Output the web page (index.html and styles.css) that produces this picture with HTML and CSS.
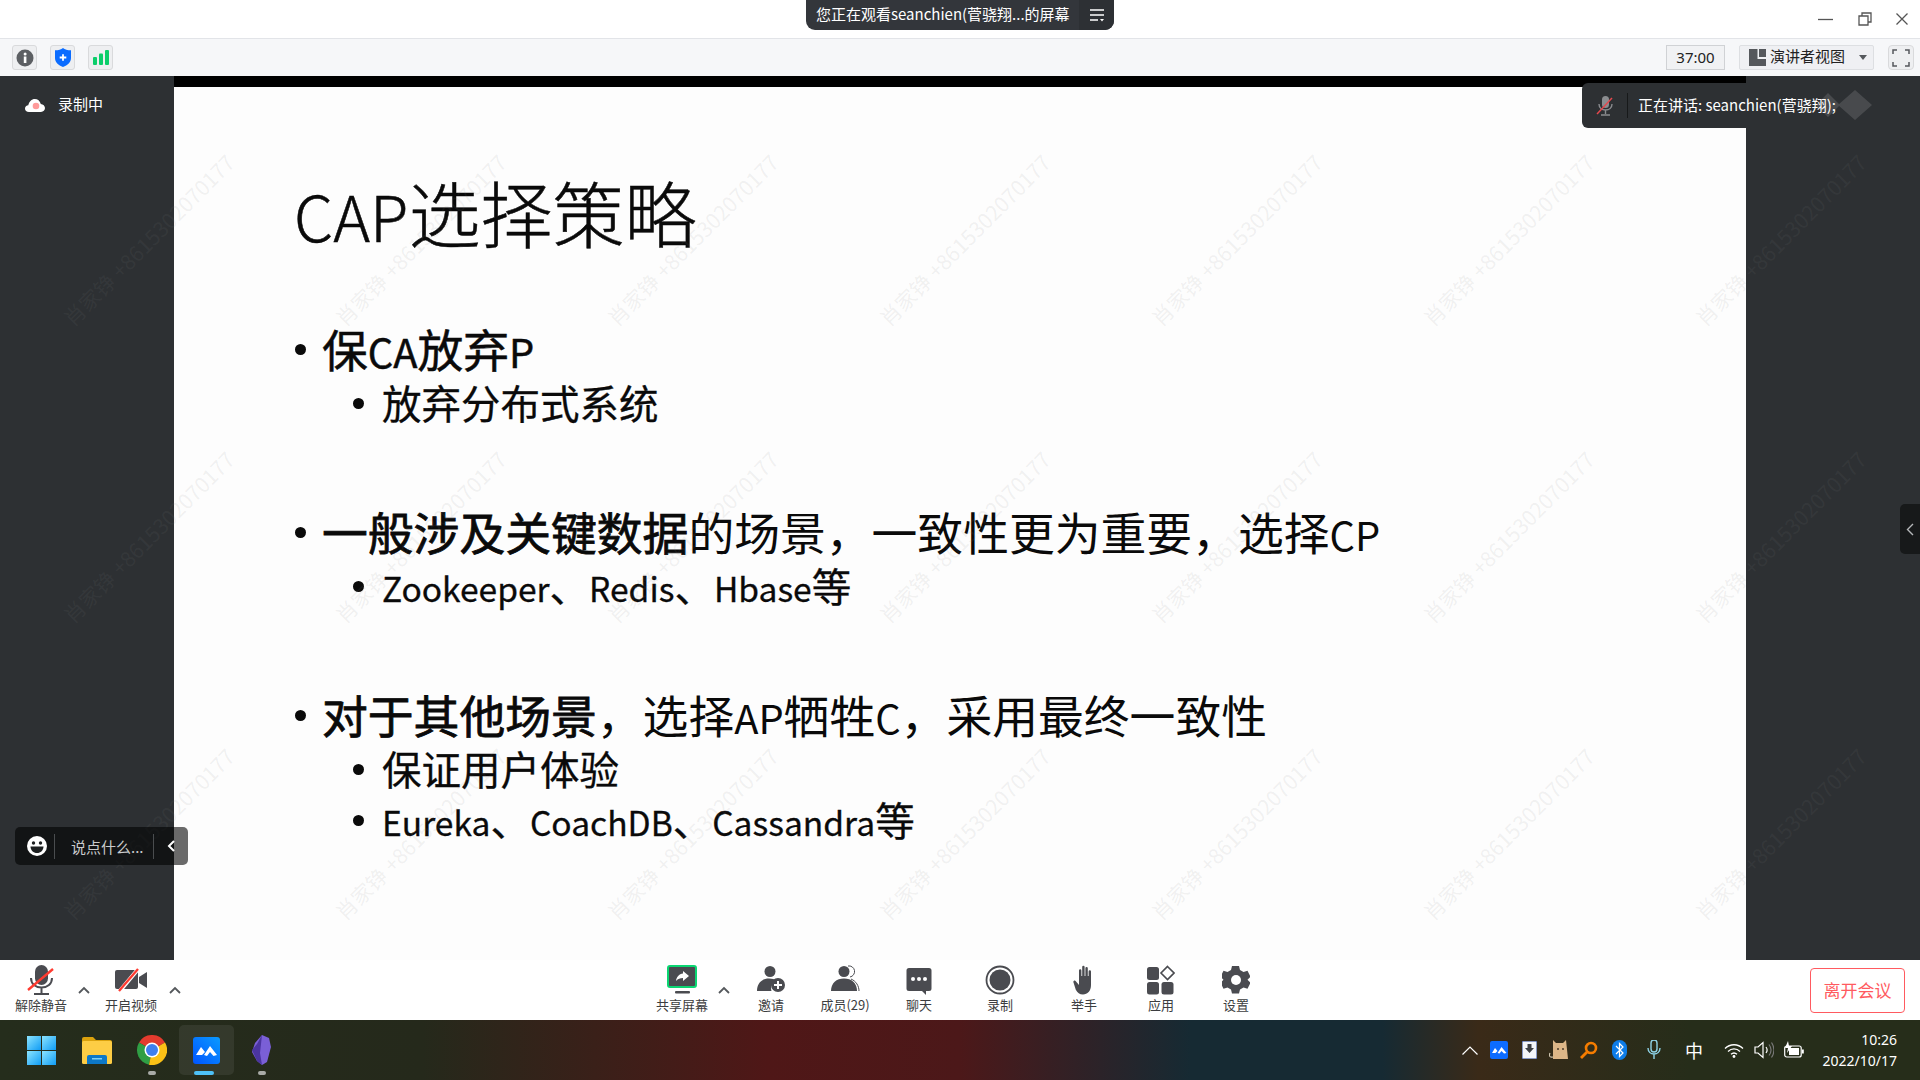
FILE: index.html
```html
<!DOCTYPE html>
<html lang="zh-CN">
<head>
<meta charset="utf-8">
<title>腾讯会议</title>
<link rel="stylesheet" href="styles.css">
</head>
<body>
<div class="app">
  <header class="titlebar">
    <div class="share-pill">
      <span class="share-text">您正在观看seanchien(菅骁翔...的屏幕</span>
      <span class="share-menu">
        <svg width="16" height="14" viewBox="0 0 16 14"><path d="M1 2h14M1 7h14M1 12h8" stroke="#fff" stroke-width="1.4" fill="none"/><path d="M11 11h4l-2 2.4z" fill="#fff"/></svg>
      </span>
    </div>
    <div class="win-controls">
      <svg width="16" height="16" viewBox="0 0 16 16"><path d="M0 8.5h15" stroke="#555" stroke-width="1.3"/></svg>
      <svg width="14" height="14" viewBox="0 0 14 14"><path d="M1 4h9v9H1zM4 4V1h9v9h-3" stroke="#555" stroke-width="1.3" fill="none"/></svg>
      <svg width="12" height="12" viewBox="0 0 12 12"><path d="M.5.5l11 11M11.5.5l-11 11" stroke="#555" stroke-width="1.3"/></svg>
    </div>
  </header>

  <div class="toolbar-top">
    <div class="tool-left">
      <span class="tool-box"><svg width="18" height="18" viewBox="0 0 18 18"><circle cx="9" cy="9" r="8.5" fill="#5c5f63"/><rect x="7.8" y="7.5" width="2.6" height="6.5" fill="#fff"/><circle cx="9.1" cy="4.9" r="1.5" fill="#fff"/></svg></span>
      <span class="tool-box"><svg width="16" height="19" viewBox="0 0 16 19"><path d="M8 0c1.700 1.500 4.600 2.300 8 2.300V10c0 4.300-3.400 7.300-8 9-4.600-1.700-8-4.700-8-9V2.300C3.400 2.300 6.300 1.500 8 0z" fill="#0b6cff"/><path d="M8 6.200v6.600M4.700 9.500h6.600" stroke="#fff" stroke-width="1.800"/></svg></span>
      <span class="tool-box"><svg width="16" height="15" viewBox="0 0 16 15"><rect x="0" y="7" width="4" height="8" rx="1" fill="#0bce6a"/><rect x="6" y="3.500" width="4" height="11.500" rx="1" fill="#0bce6a"/><rect x="12" y="0" width="4" height="15" rx="1" fill="#0bce6a"/></svg></span>
    </div>
    <div class="tool-right">
      <span class="timer">37:00</span>
      <span class="view-btn">
        <svg width="17" height="17" viewBox="0 0 17 17"><path d="M0 0h8.500v10H17v7H0z" fill="#55585c"/><rect x="10" y="0" width="7" height="8" fill="#55585c"/></svg>
        <span class="view-label">演讲者视图</span>
        <svg class="view-caret" width="8" height="5" viewBox="0 0 8 5"><path d="M0 0h8L4 5z" fill="#55585c"/></svg>
      </span>
      <span class="tool-box full-btn"><svg width="18" height="18" viewBox="0 0 18 18"><path d="M1 5V1h4M13 1h4v4M17 13v4h-4M5 17H1v-4" stroke="#55585c" stroke-width="1.500" fill="none"/></svg></span>
    </div>
  </div>

  <main class="stage">
    <aside class="side">
      <div class="rec-tag">
        <svg width="20" height="13" viewBox="0 0 20 13"><path d="M4 13C1.500 13 0 11.500 0 9.500 0 7.500 1.500 6.300 3.300 6.200 4 2.700 6.700 0 9.800 0c2.900 0 5.200 2 6 4.900 2.400.2 4.200 2 4.200 4.200 0 2.300-1.700 3.900-4 3.900z" fill="#fff"/><circle cx="11" cy="7" r="3.300" fill="#ff9a9a"/></svg>
        <span>录制中</span>
      </div>
    </aside>
    <section class="slide">
      <div class="slide-band"></div>
      <div class="slide-body">
        <h1 class="slide-title"><span class="lat">CAP</span>选择策略</h1>
        <div class="group">
          <p class="l1 semi"><span>保<span class="lat">CA</span>放弃<span class="lat">P</span></span></p>
          <p class="l2">放弃分布式系统</p>
        </div>
        <div class="group">
          <p class="l1"><span><b>一般涉及关键数据</b>的场景，一致性更为重要，选择<span class="lat">CP</span></span></p>
          <p class="l2"><span><span class="lat">Zookeeper</span>、<span class="lat">Redis</span>、<span class="lat">Hbase</span>等</span></p>
        </div>
        <div class="group">
          <p class="l1"><span><b>对于其他场景</b>，选择<span class="lat">AP</span>牺牲<span class="lat">C</span>，采用最终一致性</span></p>
          <p class="l2">保证用户体验</p>
          <p class="l2"><span><span class="lat">Eureka</span>、<span class="lat">CoachDB</span>、<span class="lat">Cassandra</span>等</span></p>
        </div>
      </div>
    </section>
    <aside class="side"></aside>

    <div class="watermarks">
      <span>肖家铮 +8615302070177</span><span>肖家铮 +8615302070177</span><span>肖家铮 +8615302070177</span><span>肖家铮 +8615302070177</span><span>肖家铮 +8615302070177</span><span>肖家铮 +8615302070177</span><span>肖家铮 +8615302070177</span>
      <span>肖家铮 +8615302070177</span><span>肖家铮 +8615302070177</span><span>肖家铮 +8615302070177</span><span>肖家铮 +8615302070177</span><span>肖家铮 +8615302070177</span><span>肖家铮 +8615302070177</span><span>肖家铮 +8615302070177</span>
      <span>肖家铮 +8615302070177</span><span>肖家铮 +8615302070177</span><span>肖家铮 +8615302070177</span><span>肖家铮 +8615302070177</span><span>肖家铮 +8615302070177</span><span>肖家铮 +8615302070177</span><span>肖家铮 +8615302070177</span>
    </div>

    <div class="speaker">
      <svg width="18" height="20" viewBox="0 0 18 20"><rect x="6" y="0" width="7" height="12" rx="3.500" fill="#8a8c8f"/><path d="M3 8c0 4 3 6 6.500 6S16 12 16 8M9.500 14v4M5 19h9" stroke="#8a8c8f" stroke-width="1.400" fill="none"/><path d="M1 18L16 2" stroke="#e5484d" stroke-width="1.500"/></svg>
      <span class="speaker-sep"></span>
      <span class="speaker-text">正在讲话: seanchien(菅骁翔);</span>
      <svg class="speaker-logo" width="64" height="30" viewBox="0 0 64 30"><path d="M18 3l12 12-12 12L6 15zM45 0l17 15-17 15-17-15z" fill="#fff" fill-opacity=".13"/></svg>
    </div>

    <div class="chat">
      <svg width="20" height="20" viewBox="0 0 20 20"><circle cx="10" cy="10" r="10" fill="#fff"/><circle cx="6.500" cy="7" r="1.700" fill="#1d2021"/><circle cx="13.500" cy="7" r="1.700" fill="#1d2021"/><path d="M3.500 10.500h13c0 3.800-2.900 6.500-6.500 6.500s-6.500-2.700-6.500-6.500z" fill="#1d2021"/></svg>
      <span class="chat-sep"></span>
      <span class="chat-text">说点什么...</span>
      <span class="chat-sep chat-sep-end"></span>
      <svg width="8" height="12" viewBox="0 0 8 12"><path d="M7 1L2 6l5 5" stroke="#fff" stroke-width="2" fill="none"/></svg>
    </div>

    <div class="side-handle">
      <svg width="8" height="13" viewBox="0 0 8 13"><path d="M7 1L1.500 6.500 7 12" stroke="#b5b7b9" stroke-width="1.400" fill="none"/></svg>
    </div>
  </main>

  <div class="toolbar-bottom">
    <div class="bt-left">
      <div class="bt-item w-audio">
        <svg class="bt-icon" width="30" height="30" viewBox="0 0 30 30"><rect x="9" y="0" width="13" height="20" rx="6.500" fill="#4a4b50"/><path d="M5 13c0 6 4.500 9.500 10.500 9.500S26 19 26 13M15.500 22.500V28M8 29h15" stroke="#4a4b50" stroke-width="2" fill="none"/><path d="M2 25L27 4" stroke="#ff3b30" stroke-width="2.300"/></svg>
        <span>解除静音</span>
      </div>
      <svg class="chev chev-audio" width="12" height="8" viewBox="0 0 12 8"><path d="M1 7l5-5 5 5" stroke="#55585c" stroke-width="1.800" fill="none"/></svg>
      <div class="bt-item w-video">
        <svg class="bt-icon" width="32" height="30" viewBox="0 0 32 30"><path d="M2 5h19a2 2 0 0 1 2 2v15a2 2 0 0 1-2 2H2a2 2 0 0 1-2-2V7a2 2 0 0 1 2-2z" fill="#4a4b50"/><path d="M24 12l8-5v16l-8-5z" fill="#4a4b50"/><path d="M4 27L24 3" stroke="#fff" stroke-width="4"/><path d="M4 26L23 4" stroke="#ff3b30" stroke-width="2.300"/></svg>
        <span>开启视频</span>
      </div>
      <svg class="chev chev-video" width="12" height="8" viewBox="0 0 12 8"><path d="M1 7l5-5 5 5" stroke="#55585c" stroke-width="1.800" fill="none"/></svg>
    </div>

    <div class="bt-center">
      <div class="bt-item w-share">
        <svg class="bt-icon" width="30" height="30" viewBox="0 0 30 30"><rect x="1" y="1" width="28" height="21" rx="2" fill="#4a4b50" stroke="#0bd672" stroke-width="2"/><path d="M16 6l6 5-6 5v-3c-3 0-5 .8-7 3 .5-4 3-7 7-7.500z" fill="#fff"/><rect x="8" y="26" width="15" height="2.500" rx="1" fill="#4a4b50"/></svg>
        <span>共享屏幕</span>
      </div>
      <svg class="chev" width="12" height="8" viewBox="0 0 12 8"><path d="M1 7l5-5 5 5" stroke="#55585c" stroke-width="1.800" fill="none"/></svg>
      <div class="bt-item w-invite">
        <svg class="bt-icon" width="29" height="30" viewBox="0 0 29 30"><circle cx="13" cy="6.500" r="5.500" fill="#4a4b50"/><path d="M0 26c0-8 5-12.500 12-12.500 3 0 5.500.7 7.500 2.300-4 1-6.500 5.500-5 10.200z" fill="#4a4b50"/><circle cx="21" cy="20" r="7" fill="#4a4b50"/><path d="M21 16v8M17 20h8" stroke="#fff" stroke-width="2"/></svg>
        <span>邀请</span>
      </div>
      <div class="bt-item w-members">
        <svg class="bt-icon" width="29" height="30" viewBox="0 0 29 30"><path d="M17 1a5.500 5.500 0 0 1 2 11" stroke="#4a4b50" stroke-width="1" fill="none"/><path d="M20 14c5 2 8 7 8 12" stroke="#4a4b50" stroke-width="1" fill="none"/><circle cx="13" cy="6.500" r="5.500" fill="#4a4b50"/><path d="M0 26c0-8 5.500-12.500 13-12.500S26 18 26 26z" fill="#4a4b50"/></svg>
        <span>成员(29)</span>
      </div>
      <div class="bt-item w-chat">
        <svg class="bt-icon" width="26" height="30" viewBox="0 0 26 30"><path d="M3 3h20a2.500 2.500 0 0 1 2.500 2.500v18a2.500 2.500 0 0 1-2.500 2.500h-3v4l-4-4H3a2.500 2.500 0 0 1-2.500-2.500v-18A2.500 2.500 0 0 1 3 3z" fill="#4a4b50"/><circle cx="7" cy="14" r="2" fill="#fff"/><circle cx="13" cy="14" r="2" fill="#fff"/><circle cx="19" cy="14" r="2" fill="#fff"/></svg>
        <span>聊天</span>
      </div>
      <div class="bt-item w-rec">
        <svg class="bt-icon" width="30" height="30" viewBox="0 0 30 30"><circle cx="15" cy="15" r="13.500" fill="none" stroke="#4a4b50" stroke-width="1.800"/><circle cx="15" cy="15" r="10.500" fill="#4a4b50"/></svg>
        <span>录制</span>
      </div>
      <div class="bt-item w-hand">
        <svg class="bt-icon" width="22" height="30" viewBox="0 0 22 30"><path d="M6 12V5.500a1.200 1.200 0 0 1 2.400 0V11h.8V2a1.200 1.200 0 0 1 2.400 0v9h.8V3.200a1.200 1.200 0 0 1 2.400 0V11h.8V6.500a1.200 1.200 0 0 1 2.400 0V20c0 6-3.500 9.500-8 9.500-3.500 0-5.500-1.800-7.200-4.800L.5 17.500c-.7-1.300 1.200-2.700 2.300-1.300L6 20z" fill="#4a4b50"/></svg>
        <span>举手</span>
      </div>
      <div class="bt-item w-apps">
        <svg class="bt-icon" width="28" height="30" viewBox="0 0 28 30"><rect x="0" y="2" width="12" height="13" rx="2.500" fill="#4a4b50"/><rect x="0" y="17" width="12" height="12.500" rx="2.500" fill="#4a4b50"/><rect x="14.500" y="17" width="12" height="12.500" rx="2.500" fill="#4a4b50"/><path d="M20.500 1.500l6.500 6.500-6.500 6.500L14 8z" fill="none" stroke="#4a4b50" stroke-width="1.600"/></svg>
        <span>应用</span>
      </div>
      <div class="bt-item w-set">
        <svg class="bt-icon" width="28" height="30" viewBox="0 0 28 30"><path d="M10.500 1h7l1 4 3.500 2 4-1.200 3 6-3 3 3 3-3 6-4-1.200-3.500 2-1 4h-7l-1-4-3.500-2-4 1.200-3-6 3-3-3-3 3-6 4 1.200 3.500-2z" fill="#4a4b50" transform="translate(-.5 0)"/><circle cx="14" cy="15" r="5" fill="#fff"/></svg>
        <span>设置</span>
      </div>
    </div>

    <div class="leave">离开会议</div>
  </div>

  <footer class="taskbar">
    <div class="tb-apps">
      <span class="tb-app"><svg width="29" height="29" viewBox="0 0 29 29"><defs><linearGradient id="w" x1="0" y1="0" x2="1" y2="1"><stop offset="0" stop-color="#8ce4ff"/><stop offset="1" stop-color="#0f9cf5"/></linearGradient></defs><rect width="14" height="14" fill="url(#w)"/><rect x="15" width="14" height="14" fill="url(#w)"/><rect y="15" width="14" height="14" fill="url(#w)"/><rect x="15" y="15" width="14" height="14" fill="url(#w)"/></svg></span>
      <span class="tb-app"><svg width="30" height="27" viewBox="0 0 30 27"><path d="M0 2a2 2 0 0 1 2-2h9l3 3h14a2 2 0 0 1 2 2v4H0z" fill="#dba20d"/><rect y="4" width="30" height="23" rx="1.500" fill="#fdcd45"/><path d="M5 20a2 2 0 0 1 2-2h16a2 2 0 0 1 2 2v7H5z" fill="#0d78c8"/><rect x="10" y="21" width="10" height="1.500" fill="#7fd0f5"/></svg></span>
      <span class="tb-app has-dot"><svg width="30" height="30" viewBox="0 0 30 30"><path d="M15 15L2 7.500A15 15 0 0 1 28 7.500z" fill="#e33b2e"/><path d="M15 15L2 7.500A15 15 0 0 0 12 29.700z" fill="#2f9e44"/><path d="M15 15L28 7.500A15 15 0 0 1 12 29.700z" fill="#fbc116"/><circle cx="15" cy="15" r="7.500" fill="#fff"/><circle cx="15" cy="15" r="6" fill="#3f7fee"/></svg></span>
      <span class="tb-app active"><svg width="27" height="27" viewBox="0 0 27 27"><defs><linearGradient id="m" x1="0" y1="1" x2="1" y2="0"><stop offset="0" stop-color="#0054ff"/><stop offset="1" stop-color="#0a9bff"/></linearGradient></defs><rect width="27" height="27" rx="3" fill="url(#m)"/><path d="M3 18l5-8 4 5-3 3zM11 18l6-9 7 9-3.500 1-3.500-4-3 4z" fill="#fff"/></svg></span>
      <span class="tb-app has-dot"><svg width="20" height="30" viewBox="0 0 20 30"><path d="M10 0l7 3 2 9-4 15-5 3-5-4-5-9 3-9z" fill="#7a5fd6"/><path d="M10 0L5 9l-5 6 5 11 5 4-2-12z" fill="#4b35a0"/></svg></span>
    </div>
    <div class="tray">
      <svg class="t-chev" width="16" height="9" viewBox="0 0 16 9"><path d="M.5 8.500L8 1l7.500 7.500" stroke="#fff" stroke-width="1.200" fill="none"/></svg>
      <span class="tray-item"><svg width="18" height="18" viewBox="0 0 18 18"><rect width="18" height="18" rx="2" fill="#0d6cff"/><path d="M2 12l3-5 2.500 3-2 2zM7.500 12l4-6 5 6-2.500.5-2.500-2.500-2 2.500z" fill="#fff"/></svg></span>
      <span class="tray-item"><svg width="15" height="18" viewBox="0 0 15 18"><path d="M0 0h15v18H0z" fill="#f4f6fa"/><path d="M0 0h15v18H0z" fill="none" stroke="#1c3d8f" stroke-width="1"/><path d="M5.500 3h4v4H12l-4.500 5L3 7h2.500z" fill="#3c3f44"/></svg></span>
      <span class="tray-item"><svg width="21" height="20" viewBox="0 0 21 20"><path d="M4 0l3 3h7l3-3 2 19H4z" fill="#ddb687"/><circle cx="9" cy="9" r="1" fill="#4a3a28"/><circle cx="14" cy="9" r="1" fill="#4a3a28"/><path d="M4 17C0 18 0 15 1 13" stroke="#cfc4ad" stroke-width="1.200" fill="none"/></svg></span>
      <span class="tray-item"><svg width="18" height="18" viewBox="0 0 18 18"><circle cx="11" cy="7" r="5" fill="none" stroke="#f57c00" stroke-width="2.600"/><path d="M7 11l-6 6" stroke="#f57c00" stroke-width="2.800"/></svg></span>
      <span class="tray-item"><svg width="15" height="20" viewBox="0 0 15 20"><rect width="15" height="20" rx="7.500" fill="#0d7ce8"/><path d="M4 6l7 7-3.500 3.500v-13L11 7l-7 7" stroke="#fff" stroke-width="1.200" fill="none"/></svg></span>
      <span class="tray-item tray-gap"><svg width="14" height="20" viewBox="0 0 14 20"><rect x="4" y="0" width="6" height="12" rx="3" fill="none" stroke="#8fd4e8" stroke-width="1.400"/><path d="M1 8c0 4 3 6 6 6s6-2 6-6M7 14v5" stroke="#8fd4e8" stroke-width="1.400" fill="none"/></svg></span>
      <span class="tray-ime">中</span>
      <span class="tray-item tray-wifi"><svg width="20" height="15" viewBox="0 0 20 15"><path d="M1 5.500c5-5 13-5 18 0M4 8.500c3.500-3.400 8.500-3.400 12 0M7 11.300c1.800-1.600 4.200-1.600 6 0" stroke="#fff" stroke-width="1.300" fill="none"/><circle cx="10" cy="13.500" r="1.400" fill="#fff"/></svg></span>
      <span class="tray-item"><svg width="20" height="18" viewBox="0 0 20 18"><path d="M1 6h3l5-4.500v15L4 12H1z" fill="none" stroke="#fff" stroke-width="1.200"/><path d="M12 6c1.500 2 1.500 4 0 6" stroke="#fff" stroke-width="1.200" fill="none"/><path d="M15 3.500c2.600 3.500 2.600 7.500 0 11M17.500 1.500c3.300 5 3.300 10 0 15" stroke="#777" stroke-width="1.200" fill="none"/></svg></span>
      <span class="tray-item"><svg width="20" height="18" viewBox="0 0 20 18"><rect x=".7" y="5" width="16.500" height="11" rx="2" fill="none" stroke="#fff" stroke-width="1.200"/><rect x="18" y="8.500" width="1.800" height="4" fill="#fff"/><rect x="5" y="7" width="10" height="7" fill="#fff"/><path d="M4 0L1 7h3l-1 5 5-7H5z" fill="#fff"/></svg></span>
      <div class="clock"><span>10:26</span><span>2022/10/17</span></div>
    </div>
  </footer>
</div>
</body>
</html>
```
FILE: styles.css
```css
* { box-sizing: border-box; }
html, body { margin: 0; padding: 0; }
body { width: 1920px; height: 1080px; overflow: hidden; font-family: "Noto Sans CJK SC", "Noto Sans", sans-serif; }
.app { display: flex; flex-direction: column; width: 1920px; height: 1080px; position: relative; }

.titlebar { height: 39px; background: #fff; border-bottom: 1px solid #e2e4e8; position: relative; display: flex; justify-content: flex-end; }
.share-pill { position: absolute; left: 806px; top: 0; width: 308px; height: 30px; background: #33363b; border-radius: 0 0 9px 9px; display: flex; color: #fff; font-size: 15px; overflow: hidden; }
.share-text { width: 273px; padding-left: 10px; line-height: 28px; white-space: nowrap; }
.share-menu { flex: 1; background: #2d3034; display: flex; align-items: center; justify-content: center; }
.win-controls { display: flex; align-items: center; gap: 24px; padding: 0 12px 0 0; height: 38px; }
.win-controls svg { display: block; }

.toolbar-top { height: 37px; background: #f6f7f9; display: flex; justify-content: space-between; align-items: center; padding: 0 6px 0 12px; }
.tool-left { display: flex; gap: 13px; }
.tool-right { display: flex; align-items: center; }
.tool-box { width: 25px; height: 25px; border: 1px solid #d9dadc; border-radius: 3px; background: #eeeff1; display: flex; align-items: center; justify-content: center; }
.timer { width: 59px; height: 25px; border: 1px solid #d0d2d5; background: #f1f2f4; font-family: "Noto Sans", sans-serif; font-size: 15px; line-height: 23px; text-align: center; color: #222; margin-right: 14px; }
.view-btn { width: 135px; height: 25px; border: 1px solid #dddfe2; border-radius: 2px; background: #eff0f3; display: flex; align-items: center; padding-left: 9px; font-size: 15px; line-height: 20px; color: #222; margin-right: 14px; }
.view-label { margin-left: 4px; margin-top: -3px; }
.view-caret { margin-left: 14px; }
.full-btn { width: 26px; border-radius: 4px; }

.stage { height: 884px; display: flex; position: relative; overflow: hidden; }
.side { width: 174px; background: #2d3033; }
.rec-tag { display: flex; align-items: center; gap: 13px; height: 58px; padding-left: 25px; color: #fff; font-size: 15px; line-height: 18px; }
.rec-tag span { margin-top: -2px; }
.slide { flex: 1; background: #fdfdfd; display: flex; flex-direction: column; color: #0a0a0a; }
.slide-band { height: 11px; background: #000; }
.slide-body { padding: 79px 0 0 120px; }
.slide-title { margin: 0 0 64px; font-size: 72px; line-height: 90px; height: 90px; font-weight: 300; white-space: nowrap; -webkit-text-stroke: .5px #0a0a0a; }
.lat { font-size: .87em; }
.group { margin-bottom: 76px; }
.group p { margin: 0; white-space: nowrap; display: flex; align-items: center; }
.l1 { font-size: 45.8px; height: 56px; }
.l2 { font-size: 39.5px; height: 51px; padding-left: 56px; -webkit-text-stroke: .3px #0a0a0a; }
.l2 .lat { font-size: .85em; }
.l1::before, .l2::before { content: ""; width: 11px; height: 11px; border-radius: 50%; background: #0a0a0a; flex: none; margin-top: 3px; }
.l1::before { margin-right: 16px; margin-left: 1px; }
.l2::before { margin-right: 18px; margin-left: 3px; }
.l1 b { font-weight: 400; -webkit-text-stroke: .8px #0a0a0a; }
.semi { -webkit-text-stroke: .5px #0a0a0a; }

.watermarks { position: absolute; left: 12px; top: 15px; display: grid; grid-template-columns: repeat(7, 272px); grid-auto-rows: 297px; pointer-events: none; }
.watermarks span { display: flex; align-items: center; justify-content: center; transform: rotate(-45deg); white-space: nowrap; font-size: 21px; color: rgba(130, 130, 130, .11); }

.speaker { position: absolute; left: 1582px; top: 7px; width: 338px; height: 45px; background: #2d3033; border-radius: 6px 0 0 6px; display: flex; align-items: center; padding-left: 14px; color: #fff; font-size: 15px; }
.speaker-text { margin-top: -2px; }
.speaker-sep { width: 1px; height: 25px; background: #17191a; margin: 0 10px 0 13px; }
.speaker-logo { position: absolute; left: 228px; top: 7px; }
.chat { position: absolute; left: 15px; top: 751px; width: 173px; height: 38px; background: rgba(0, 0, 0, .58); border-radius: 5px; display: flex; align-items: center; padding-left: 12px; color: #c9cbcc; font-size: 15px; }
.chat-sep { width: 1px; height: 25px; background: #4a4d4f; margin: 0 16px 0 7px; flex: none; }
.chat-text { white-space: nowrap; width: 82px; }
.chat-sep-end { margin: 0 13px 0 0; }
.side-handle { position: absolute; left: 1900px; top: 428px; width: 20px; height: 50px; background: #17191a; border-radius: 5px 0 0 5px; display: flex; align-items: center; justify-content: center; }

.toolbar-bottom { height: 60px; background: #fff; display: flex; position: relative; }
.bt-left, .bt-center { display: flex; align-items: flex-start; }
.bt-left { width: 650px; }
.bt-item { display: flex; flex-direction: column; align-items: center; font-size: 13px; line-height: 17px; color: #3c3d40; white-space: nowrap; padding-top: 5px; }
.bt-icon { display: block; height: 30px; margin-bottom: 1px; }
.chev { flex: none; margin-top: 26px; }
.w-audio { width: 82px; }
.w-video { width: 64px; }
.chev-audio { margin-left: -4px; margin-right: 9px; }
.chev-video { margin-left: 6px; }
.w-share { width: 64px; }
.bt-center .chev { margin: 26px 4px 0; }
.w-invite { width: 74px; }
.w-members { width: 74px; }
.w-chat { width: 74px; }
.w-rec { width: 88px; }
.w-hand { width: 80px; }
.w-apps { width: 74px; }
.w-set { width: 76px; }
.leave { position: absolute; left: 1810px; top: 8px; width: 95px; height: 45px; border: 1px solid #ff5a60; border-radius: 4px; color: #ff5a60; font-size: 17px; line-height: 20px; display: flex; align-items: center; justify-content: center; padding-bottom: 2px; }

.taskbar { height: 60px; display: flex; justify-content: space-between; background: linear-gradient(90deg, #252d1c 0, #25291b 22%, #4f1717 40%, #4c1819 50%, #162a33 62%, #162a33 72%, #3a2a18 77%, #262d1a 88%, #262d1a 100%); color: #fff; }
.tb-apps { display: flex; align-items: center; padding-left: 14px; }
.tb-app { width: 55px; height: 50px; display: flex; align-items: center; justify-content: center; position: relative; }
.has-dot::after { content: ""; position: absolute; bottom: 0; left: 24px; width: 8px; height: 4px; border-radius: 2px; background: #a9aba7; }
.active { background: rgba(255, 255, 255, .07); border-radius: 5px; }
.active::after { content: ""; position: absolute; bottom: 0; left: 15px; width: 20px; height: 4px; border-radius: 2px; background: #4ec1f7; }
.tray { display: flex; align-items: center; padding-right: 23px; }
.t-chev { margin-right: 6px; }
.tray-item { width: 30px; display: flex; justify-content: center; }
.tray-gap { width: 40px; }
.tray-ime { width: 40px; text-align: center; font-size: 18px; }
.tray-wifi { margin-left: 5px; }
.clock { display: flex; flex-direction: column; align-items: flex-end; font-family: "Noto Sans", sans-serif; font-size: 14px; line-height: 21px; margin-left: 12px; width: 76px; }
```
